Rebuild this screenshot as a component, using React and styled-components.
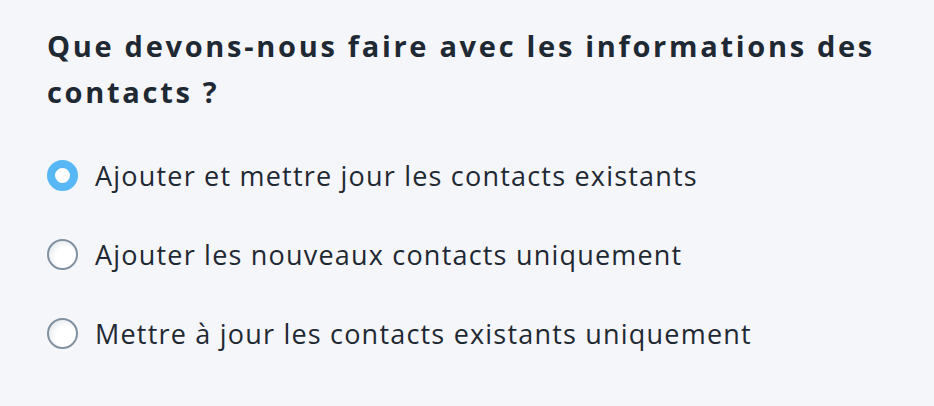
import React, { useState } from "react";
import styled, { createGlobalStyle } from "styled-components";

const Global = createGlobalStyle`
  html, body { margin: 0; padding: 0; background: #f5f6fa; }
  body { font-family: "Open Sans", sans-serif; color: #1f2933; }
`;

const Page = styled.div`
  width: 934px;
  height: 406px;
  box-sizing: border-box;
  padding: 23px 47px 0;
  background: #f5f6fa;
`;

const Title = styled.h2`
  margin: 0 0 39px;
  font-size: 29px;
  line-height: 46px;
  font-weight: 700;
  letter-spacing: 2.7px;
  color: #1f2933;
`;

const List = styled.div`
  display: flex;
  flex-direction: column;
  gap: 36px;
`;

const Row = styled.label`
  display: flex;
  align-items: center;
  gap: 17px;
  font-size: 27px;
  line-height: 43px;
  letter-spacing: 1.2px;
  color: #1f2933;
  cursor: pointer;
`;

const Radio = styled.span`
  flex: none;
  box-sizing: border-box;
  width: 31px;
  height: 31px;
  border-radius: 50%;
  border: ${(p) => (p.$checked ? "8.5px solid #58b8f6" : "2px solid #8091a2")};
  background: ${(p) =>
    p.$checked
      ? "#ffffff"
      : "radial-gradient(circle at 62% 62%, #ffffff 0%, #ffffff 42%, #d9dfe6 100%)"};
`;

const options = [
  "Ajouter et mettre jour les contacts existants",
  "Ajouter les nouveaux contacts uniquement",
  "Mettre à jour les contacts existants uniquement",
];

export default function App() {
  const [sel, setSel] = useState(0);
  return (
    <>
      <Global />
      <Page>
        <Title>Que devons-nous faire avec les informations des contacts ?</Title>
        <List>
          {options.map((o, i) => (
            <Row key={i} onClick={() => setSel(i)}>
              <Radio $checked={sel === i} />
              {o}
            </Row>
          ))}
        </List>
      </Page>
    </>
  );
}
